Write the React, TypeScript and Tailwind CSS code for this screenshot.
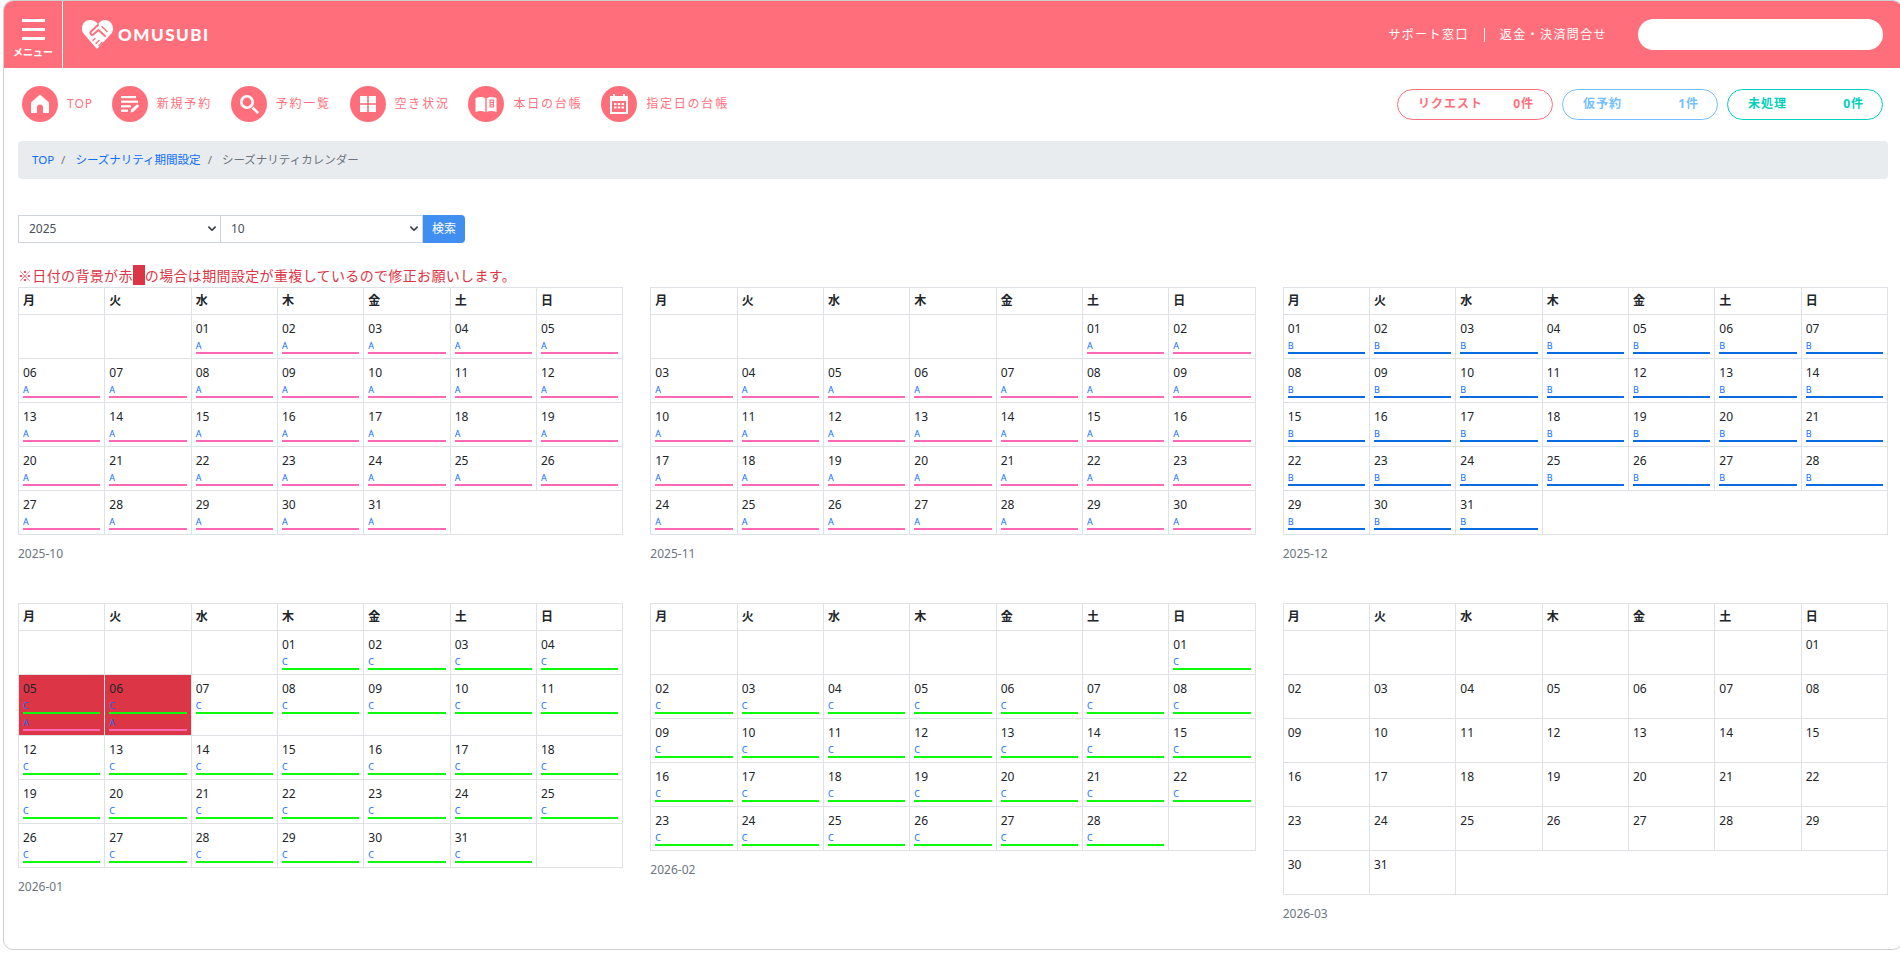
import React from "react";

type Month = { label: string; offset: number; days: number; tag?: string };

const months: Month[] = [
  { label: "2025-10", offset: 2, days: 31, tag: "A" },
  { label: "2025-11", offset: 5, days: 30, tag: "A" },
  { label: "2025-12", offset: 0, days: 31, tag: "B" },
  { label: "2026-01", offset: 3, days: 31, tag: "C" },
  { label: "2026-02", offset: 6, days: 28, tag: "C" },
  { label: "2026-03", offset: 6, days: 31 },
];

const week = ["月", "火", "水", "木", "金", "土", "日"];

function Tag(props: { name: string }) {
  const { name } = props;
  const line = name === "A" ? "border-[#ff69b4]" : name === "B" ? "border-[#0a6ae0]" : "border-[#0cfa0c]";
  return (
    <div className={"h-[17px] pt-[3px] text-[9px] leading-[12px] text-[#0d6efd] border-b-2 " + line}>
      {name}
    </div>
  );
}

function Calendar(props: { month: Month }) {
  const { month } = props;
  const cells: (number | null)[] = [];
  for (let i = 0; i < month.offset; i++) cells.push(null);
  for (let d = 1; d <= month.days; d++) cells.push(d);
  const rows: (number | null)[][] = [];
  for (let i = 0; i < cells.length; i += 7) rows.push(cells.slice(i, i + 7));

  return (
    <div className="h-[316px]">
      <table className="w-full table-fixed border-collapse text-[12px] text-[#212529]">
        <thead>
          <tr>
            {week.map((w) => (
              <th key={w} className="h-[27px] border border-[#dee2e6] px-[4px] text-left font-bold leading-[18px]">
                {w}
              </th>
            ))}
          </tr>
        </thead>
        <tbody>
          {rows.map((row, r) => (
            <tr key={r}>
              {row.map((d, i) => {
                const clash = month.label === "2026-01" && (d === 5 || d === 6);
                return (
                  <td
                    key={i}
                    className={"h-[44px] border border-[#dee2e6] px-[4px] pt-[5px] pb-[4px] align-top " + (clash ? "bg-[#dc3545]" : "")}
                  >
                    {d !== null && (
                      <>
                        <div className="h-[17px] leading-[17px]">{String(d).padStart(2, "0")}</div>
                        {month.tag && <Tag name={month.tag} />}
                        {clash && <Tag name="A" />}
                      </>
                    )}
                  </td>
                );
              })}
              {row.length < 7 && <td colSpan={7 - row.length} className="border border-[#dee2e6]"></td>}
            </tr>
          ))}
        </tbody>
      </table>
      <div className="mt-[10px] text-[12px] leading-[18px] text-[#6c757d]">{month.label}</div>
    </div>
  );
}

function Circle(props: { children: React.ReactNode }) {
  return (
    <span className="flex h-[36px] w-[36px] items-center justify-center rounded-full bg-[#ff6f7b]">
      <svg width="24" height="24" viewBox="0 0 24 24" fill="#fff">
        {props.children}
      </svg>
    </span>
  );
}

const navItems: { label: string; icon: React.ReactNode }[] = [
  { label: "TOP", icon: <path d="M12 2.5 21 10.5V21H15V15.5C15 13.5 13.6 12.5 12 12.5S9 13.5 9 15.5V21H3V10.5Z" /> },
  {
    label: "新規予約",
    icon: (
      <>
        <rect x="3" y="4" width="15" height="2.2" />
        <rect x="3" y="8.6" width="17" height="2.2" />
        <rect x="3" y="13.2" width="10" height="2.2" />
        <rect x="3" y="17.6" width="7" height="2.2" />
        <path d="M12.5 20.5 13.2 17.5 18.8 12.6C19.8 11.8 21.6 13.4 20.7 14.6L15.4 19.8Z" />
      </>
    ),
  },
  {
    label: "予約一覧",
    icon: (
      <>
        <path d="M10 3a7 7 0 1 0 0 14 7 7 0 0 0 0-14Zm0 2.6a4.4 4.4 0 1 1 0 8.8 4.4 4.4 0 0 1 0-8.8Z" />
        <path d="M14.6 16.4 16.4 14.6 22 20.2 20.2 22Z" />
      </>
    ),
  },
  {
    label: "空き状況",
    icon: (
      <>
        <rect x="4" y="4" width="7.2" height="7.2" />
        <rect x="12.8" y="4" width="7.2" height="7.2" />
        <rect x="4" y="12.8" width="7.2" height="7.2" />
        <rect x="12.8" y="12.8" width="7.2" height="7.2" />
      </>
    ),
  },
  {
    label: "本日の台帳",
    icon: (
      <>
        <path d="M1.5 6C5 4.6 8.5 4.6 11.3 6.2V20C8.5 18.6 5 18.6 1.5 20Z" />
        <path
          fillRule="evenodd"
          d="M12.7 6.2C15.5 4.6 19 4.6 22.5 6V20C19 18.6 15.5 18.6 12.7 20ZM15.5 7.5V15.5H20V7.5ZM16.6 8.8H18.9V10H16.6ZM16.6 11H18.9V12.2H16.6ZM16.6 13.2H18.9V14.4H16.6Z"
        />
      </>
    ),
  },
  {
    label: "指定日の台帳",
    icon: (
      <path
        fillRule="evenodd"
        d="M6 2H8V4H16V2H18V4H21V22H3V4H6ZM5 9V20H19V9ZM7 11H9.5V13H7ZM10.8 11H13.2V13H10.8ZM14.5 11H17V13H14.5ZM7 14.5H9.5V16.5H7ZM10.8 14.5H13.2V16.5H10.8ZM14.5 14.5H17V16.5H14.5Z"
      />
    ),
  },
];

function Pill(props: { label: string; count: string; color: string }) {
  const { label, count, color } = props;
  return (
    <div className={"flex h-[31px] w-[156px] items-center justify-between rounded-full border bg-white pl-[20px] pr-[18px] text-[12px] font-bold tracking-[1px] " + color}>
      <span>{label}</span>
      <span>{count}</span>
    </div>
  );
}

function Picker(props: { value: string; options: string[]; width: string }) {
  const { value, options, width } = props;
  return (
    <div className={"relative h-[28px] " + width}>
      <select
        defaultValue={value}
        className="h-full w-full appearance-none border border-[#ced4da] bg-white pl-[10px] text-[12px] text-[#495057] outline-none"
      >
        {options.map((o) => (
          <option key={o}>{o}</option>
        ))}
      </select>
      <svg className="absolute right-[3px] top-[9px]" width="12" height="10" viewBox="0 0 16 16" fill="none" stroke="#343a40" strokeWidth="2.6" strokeLinecap="round" strokeLinejoin="round">
        <path d="M3 5l5 5 5-5" />
      </svg>
    </div>
  );
}

export default function App() {
  return (
    <div className="h-[953px] w-[1900px] overflow-hidden bg-white font-['Noto_Sans','Noto_Sans_CJK_JP',sans-serif]">
      <div className="ml-[3px] h-[950px] w-[1900px] overflow-hidden rounded-[10px] border border-[#cfcfcf]">
        <header className="flex h-[67px] items-center bg-[#ff6f7b] text-white">
          <div className="flex h-full w-[59px] flex-col items-center border-r border-white pt-[18px]">
            <span className="h-[3px] w-[23px] bg-white"></span>
            <span className="mt-[6px] h-[3px] w-[23px] bg-white"></span>
            <span className="mt-[6px] h-[3px] w-[23px] bg-white"></span>
            <span className="mt-[5px] text-[10px] font-bold leading-[15px]">メニュー</span>
          </div>
          <div className="ml-[18px] flex items-center">
            <svg width="33" height="31" viewBox="0 0 33 31" fill="none">
              <path d="M9 1C4 1 1 5 1 9.5c0 2 .6 3.6 1.6 5L16 30 30.4 14.5c1-1.4 1.6-3 1.6-5C32 5 28.5 1 24 1c-2.5 0-5 1-7 4.5C15 2 12 1 9 1Z" fill="#fff" />
              <path d="M17 6 10 12.5C8.5 14 10 16.8 12.3 15.6L17.5 11l6.5 6" stroke="#ff6f7b" strokeWidth="2" strokeLinecap="round" strokeLinejoin="round" />
              <path d="M21 7.5l5 5M12 21.5l2-2M15 24.5l3-3M18 26.5l3-3" stroke="#ff6f7b" strokeWidth="1.4" strokeLinecap="round" />
            </svg>
            <span className="ml-[4px] font-['Lato',sans-serif] text-[17px] font-black leading-none tracking-[1.5px]">OMUSUBI</span>
          </div>
          <div className="ml-auto flex items-center text-[12px] tracking-[1.4px]">
            <span>サポート窓口</span>
            <span className="mx-[15px] h-[14px] w-px bg-white"></span>
            <span>返金・決済問合せ</span>
          </div>
          <input className="ml-[31px] mr-[19px] h-[31px] w-[245px] rounded-full bg-white outline-none" />
        </header>

        <div className="px-[14px]">
          <div className="flex h-[73px] items-center pb-[1px] pl-[4px] pr-[5px]">
            {navItems.map((item) => (
              <a
                key={item.label}
                className={"mr-[18.7px] flex items-center gap-[9px] text-[12px] text-[#ff6f7b] " + (item.label === "TOP" ? "tracking-[1px]" : "tracking-[1.8px]")}
              >
                <Circle>{item.icon}</Circle>
                {item.label}
              </a>
            ))}
            <div className="ml-auto flex gap-[9px]">
              <Pill label="リクエスト" count="0件" color="border-[#ff6f7b] text-[#ff6f7b]" />
              <Pill label="仮予約" count="1件" color="border-[#74bfff] text-[#74bfff]" />
              <Pill label="未処理" count="0件" color="border-[#00cfbb] text-[#00cfbb]" />
            </div>
          </div>

          <nav className="flex h-[38px] items-center gap-[7px] rounded-[4px] bg-[#e9ecef] px-[14px] text-[11.5px] text-[#6c757d]">
            <a className="text-[#0d6efd]">TOP</a>
            <span>/</span>
            <a className="ml-[3px] text-[#0d6efd]">シーズナリティ期間設定</a>
            <span>/</span>
            <span className="ml-[3px]">シーズナリティカレンダー</span>
          </nav>

          <div className="mt-[36px] flex">
            <Picker value="2025" options={["2024", "2025", "2026"]} width="w-[203px]" />
            <Picker value="10" options={["10", "11", "12"]} width="-ml-px w-[203px]" />
            <button className="h-[28px] w-[42px] rounded-r-[4px] bg-[#408ef0] text-[12px] text-white">検索</button>
          </div>

          <p className="mt-[21px] h-[23px] font-['Noto_Sans_CJK_JP',sans-serif] text-[14px] leading-[23px] tracking-[0.35px] text-[#dc3545]">
            ※日付の背景が赤<span className="inline-block h-[20px] w-[12px] bg-[#dc3545] align-[-4px]"></span>の場合は期間設定が重複しているので修正お願いします。
          </p>

          <div className="grid grid-cols-3 gap-x-[27px]">
            {months.map((m) => (
              <Calendar key={m.label} month={m} />
            ))}
          </div>
        </div>
      </div>
    </div>
  );
}
